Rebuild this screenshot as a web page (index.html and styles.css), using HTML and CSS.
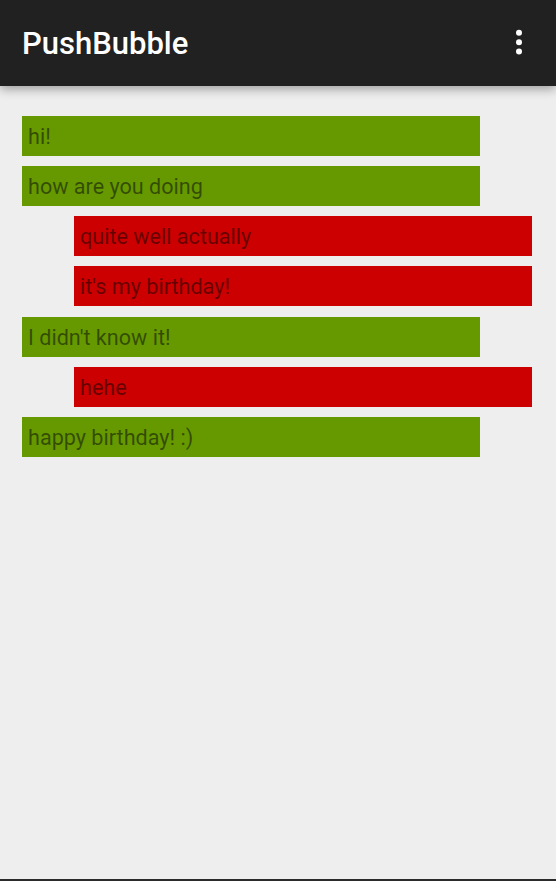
FILE: index.html
```html
<!DOCTYPE html>
<html>
<head>
<meta charset="utf-8">
<link rel="stylesheet" href="styles.css">
</head>
<body>
<div class="app">
  <header class="toolbar">
    <div class="title">PushBubble</div>
    <div class="overflow" aria-label="More options">
      <svg width="8" height="26" viewBox="0 0 8 26"><circle cx="4" cy="3.7" r="3" fill="#fff"/><circle cx="4" cy="13.2" r="3" fill="#fff"/><circle cx="4" cy="22.6" r="3" fill="#fff"/></svg>
    </div>
  </header>
  <main class="messages">
    <div class="bubble mine">hi!</div>
    <div class="bubble mine">how are you doing</div>
    <div class="bubble theirs">quite well actually</div>
    <div class="bubble theirs">it's my birthday!</div>
    <div class="bubble mine">I didn't know it!</div>
    <div class="bubble theirs">hehe</div>
    <div class="bubble mine">happy birthday! :)</div>
  </main>
  <div class="bottom-edge"></div>
</div>
</body>
</html>
```
FILE: styles.css
```css
html, body {
  margin: 0;
  padding: 0;
  background: #eeeeee;
}
.app {
  height: 881px;
  display: flex;
  flex-direction: column;
  font-family: Roboto, "Noto Sans", sans-serif;
  overflow: hidden;
}
.toolbar {
  height: 86px;
  flex: none;
  background: #212121;
  display: flex;
  align-items: center;
  justify-content: space-between;
  padding: 0 33px 0 22px;
  box-shadow: 0 3px 10px rgba(0,0,0,0.35);
  position: relative;
  z-index: 1;
}
.title {
  color: #ffffff;
  font-size: 31px;
  font-weight: 500;
  margin-top: 1px;
}
.overflow {
  display: flex;
  align-items: center;
  height: 26px;
  margin-top: -2px;
}
.overflow svg { display: block; }
.messages {
  flex: 1;
  display: flex;
  flex-direction: column;
  gap: 10.17px;
  padding: 30px 0 0 0;
}
.bubble {
  width: 458px;
  height: 40px;
  box-sizing: border-box;
  padding: 1px 6px 0 6px;
  display: flex;
  align-items: center;
  font-size: 21.6px;
  color: rgba(0,0,0,0.5);
}
.mine {
  background: #669900;
  margin-left: 22px;
}
.theirs {
  background: #cc0000;
  margin-left: 74px;
}
.bottom-edge {
  flex: none;
  height: 2px;
  background: #2b2b2b;
}
```
